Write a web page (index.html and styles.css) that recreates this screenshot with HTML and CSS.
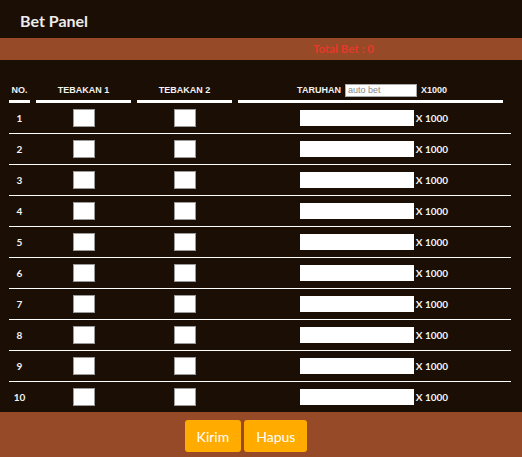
FILE: index.html
```html
<!DOCTYPE html>
<html>
<head>
<meta charset="utf-8">
<link rel="stylesheet" href="styles.css">
</head>
<body>
<div class="panel">
  <div class="title">Bet Panel</div>
  <div class="total">Total Bet : 0</div>
  <div class="table">
    <div class="row head">
      <div class="th">NO.</div>
      <div class="th">TEBAKAN 1</div>
      <div class="th">TEBAKAN 2</div>
      <div class="th th-bet">TARUHAN <input class="auto" type="text" placeholder="auto bet"> X1000</div>
    </div>
    <div class="row"><div class="num">1</div><div class="cell"><input class="box" type="text"></div><div class="cell"><input class="box" type="text"></div><div class="bet"><input class="amt" type="text"><span class="mult">X 1000</span></div></div>
    <div class="row"><div class="num">2</div><div class="cell"><input class="box" type="text"></div><div class="cell"><input class="box" type="text"></div><div class="bet"><input class="amt" type="text"><span class="mult">X 1000</span></div></div>
    <div class="row"><div class="num">3</div><div class="cell"><input class="box" type="text"></div><div class="cell"><input class="box" type="text"></div><div class="bet"><input class="amt" type="text"><span class="mult">X 1000</span></div></div>
    <div class="row"><div class="num">4</div><div class="cell"><input class="box" type="text"></div><div class="cell"><input class="box" type="text"></div><div class="bet"><input class="amt" type="text"><span class="mult">X 1000</span></div></div>
    <div class="row"><div class="num">5</div><div class="cell"><input class="box" type="text"></div><div class="cell"><input class="box" type="text"></div><div class="bet"><input class="amt" type="text"><span class="mult">X 1000</span></div></div>
    <div class="row"><div class="num">6</div><div class="cell"><input class="box" type="text"></div><div class="cell"><input class="box" type="text"></div><div class="bet"><input class="amt" type="text"><span class="mult">X 1000</span></div></div>
    <div class="row"><div class="num">7</div><div class="cell"><input class="box" type="text"></div><div class="cell"><input class="box" type="text"></div><div class="bet"><input class="amt" type="text"><span class="mult">X 1000</span></div></div>
    <div class="row"><div class="num">8</div><div class="cell"><input class="box" type="text"></div><div class="cell"><input class="box" type="text"></div><div class="bet"><input class="amt" type="text"><span class="mult">X 1000</span></div></div>
    <div class="row"><div class="num">9</div><div class="cell"><input class="box" type="text"></div><div class="cell"><input class="box" type="text"></div><div class="bet"><input class="amt" type="text"><span class="mult">X 1000</span></div></div>
    <div class="row last"><div class="num">10</div><div class="cell"><input class="box" type="text"></div><div class="cell"><input class="box" type="text"></div><div class="bet"><input class="amt" type="text"><span class="mult">X 1000</span></div></div>
  </div>
  <div class="footer">
    <button class="btn">Kirim</button>
    <button class="btn">Hapus</button>
  </div>
</div>
</body>
</html>
```
FILE: styles.css
```css
html, body {
  margin: 0;
  padding: 0;
  background: #1b0e04;
}
.panel {
  width: 522px;
  height: 457px;
  background: #1b0e04;
  font-family: Lato, "Open Sans", sans-serif;
  color: #fff;
  display: flex;
  flex-direction: column;
}
.title {
  height: 34px;
  padding-top: 4px;
  padding-left: 20px;
  line-height: 34px;
  font-size: 16px;
  font-weight: 700;
  color: #ececec;
}
.total {
  height: 22px;
  line-height: 22px;
  background: #964a27;
  color: #e3392c;
  font-size: 11.5px;
  font-weight: 700;
  padding-left: 313px;
}
.table {
  padding-top: 20px;
  padding-left: 9px;
  width: 502px;
  flex: 1;
}
.row {
  display: grid;
  grid-template-columns: 21px 95px 95px 265px;
  column-gap: 6px;
  height: 30px;
  border-bottom: 1px solid #fff;
  align-items: center;
}
.row.last {
  border-bottom: none;
}
.row.head {
  height: 23px;
  border-bottom: none;
  align-items: stretch;
}
.th {
  border-bottom: 3px solid #fff;
  font-family: "Liberation Sans", Arial, sans-serif;
  font-weight: 700;
  font-size: 9px;
  color: #f2f2f2;
  display: flex;
  align-items: center;
  justify-content: center;
  white-space: nowrap;
}
.th-bet {
  padding-left: 3px;
  gap: 4px;
}
.auto {
  box-sizing: border-box;
  width: 72px;
  height: 13px;
  margin: 0;
  padding: 0 2px;
  border: 1px solid #a9a9a9;
  background: #fff;
  font-family: "Liberation Sans", Arial, sans-serif;
  font-size: 9px;
  font-weight: 400;
  outline: none;
}
.auto::placeholder {
  color: #8a8a8a;
}
.num {
  text-align: center;
  font-size: 10px;
  font-weight: 700;
  color: #f4f4f4;
}
.cell {
  display: flex;
  justify-content: center;
}
.box {
  box-sizing: border-box;
  width: 22px;
  height: 18px;
  margin: 0;
  padding: 0;
  border: 1px solid #9a9a9a;
  background: #fff;
  outline: none;
}
.bet {
  display: flex;
  justify-content: center;
  align-items: center;
  padding-left: 7px;
  gap: 2px;
}
.amt {
  box-sizing: border-box;
  width: 114px;
  height: 16px;
  margin: 0;
  padding: 0;
  border: none;
  background: #fff;
  outline: none;
  flex: none;
}
.mult {
  font-size: 10px;
  font-weight: 700;
  color: #f4f4f4;
  white-space: nowrap;
}
.footer {
  height: 45px;
  background: #964a27;
  display: flex;
  justify-content: center;
  align-items: flex-start;
  padding-top: 8px;
  padding-right: 30px;
  box-sizing: border-box;
  gap: 3px;
}
.btn {
  height: 32px;
  padding: 0 12px;
  border: none;
  border-radius: 3px;
  background: #ffab00;
  color: #fff;
  font-family: Lato, "Open Sans", sans-serif;
  font-size: 14px;
  font-weight: 400;
  cursor: pointer;
}
```
